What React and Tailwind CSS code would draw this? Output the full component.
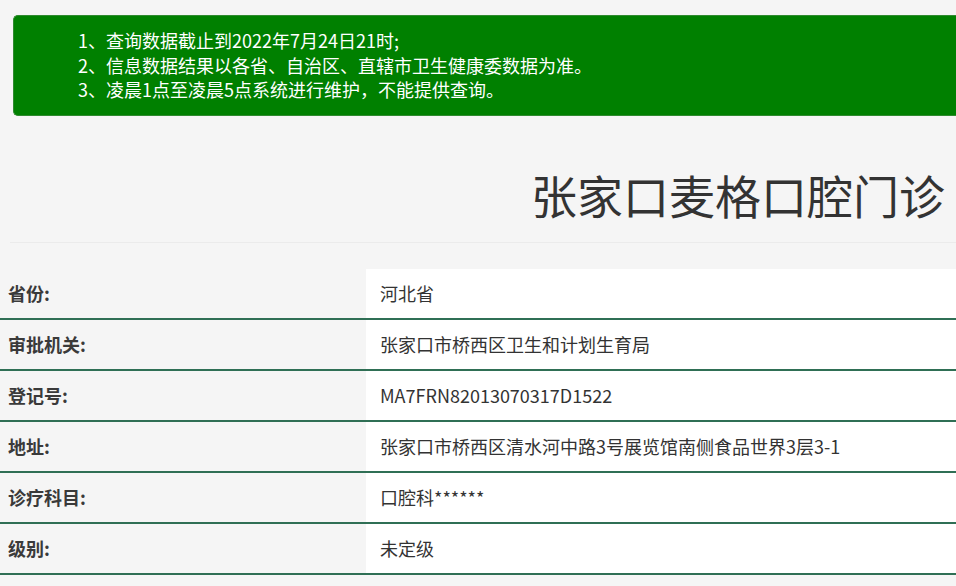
import React from "react";

const rows = [
  { label: "省份:", value: "河北省" },
  { label: "审批机关:", value: "张家口市桥西区卫生和计划生育局" },
  { label: "登记号:", value: "MA7FRN82013070317D1522" },
  { label: "地址:", value: "张家口市桥西区清水河中路3号展览馆南侧食品世界3层3-1" },
  { label: "诊疗科目:", value: "口腔科******" },
  { label: "级别:", value: "未定级" },
];

const notices = [
  "1、查询数据截止到2022年7月24日21时;",
  "2、信息数据结果以各省、自治区、直辖市卫生健康委数据为准。",
  "3、凌晨1点至凌晨5点系统进行维护，不能提供查询。",
];

const App = () => {
  return (
    <div
      className="min-h-[586px] bg-[#f5f5f5] pt-[15px] overflow-hidden"
      style={{ fontFamily: '"Noto Sans CJK SC", "Liberation Sans", sans-serif' }}
    >
      {/* 提示信息 */}
      <div className="ml-[13px] h-[101px] bg-[#008000] rounded-l-[5px] border border-r-0 border-[#2f8a2f] pl-[64px] pt-[12px] text-white text-[18px] leading-[24.5px]">
        {notices.map((line, index) => (
          <p key={index}>{line}</p>
        ))}
      </div>

      {/* 机构名称 */}
      <h1 className="mt-[48px] pr-[11px] text-right text-[46px] leading-[60px] font-normal text-[#333]">
        张家口麦格口腔门诊
      </h1>
      <div className="mt-[18px] ml-[10px] border-t border-[#ebebeb]"></div>

      {/* 详细信息 */}
      <div className="mt-[26px]">
        {rows.map((row, index) => (
          <div key={index} className="flex h-[51px] border-b-2 border-[#2f6f55]">
            <div className="w-[366px] flex items-center pl-[8px] text-[18px] font-bold text-[#3a3a3a]">
              {row.label}
            </div>
            <div className="flex-1 flex items-center bg-white pl-[14px] text-[18px] text-[#333]">
              {row.value}
            </div>
          </div>
        ))}
      </div>
    </div>
  );
};

export default App;
